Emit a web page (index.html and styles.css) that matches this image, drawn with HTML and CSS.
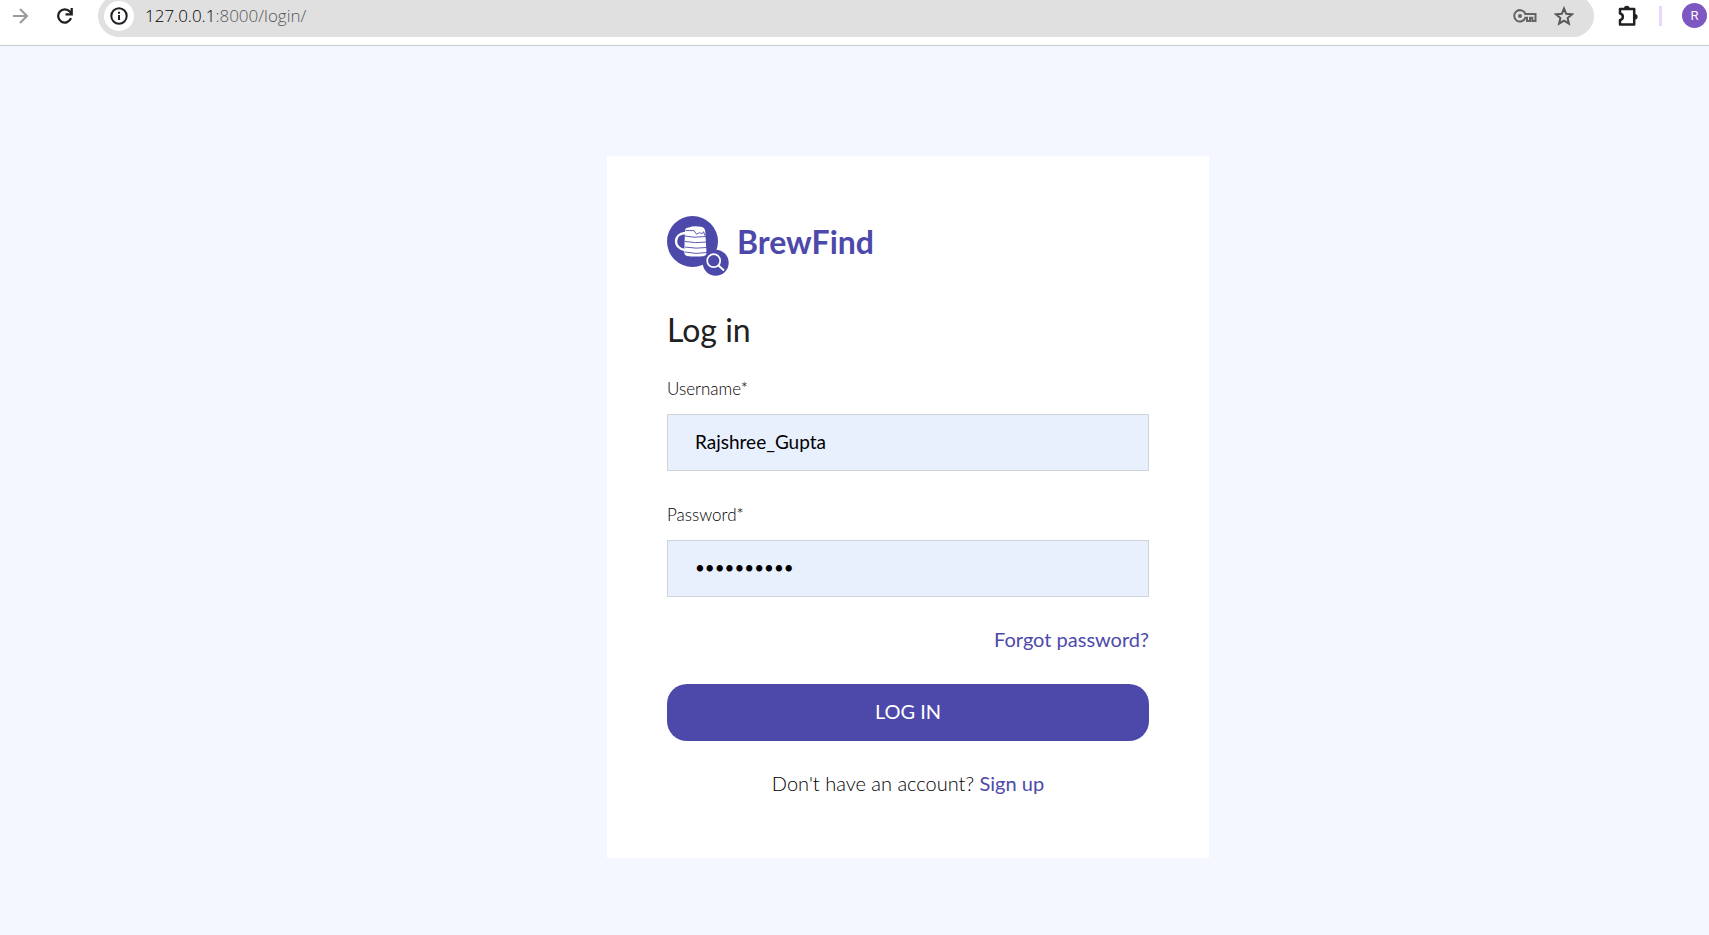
FILE: index.html
```html
<!DOCTYPE html>
<html lang="en">
<head>
<meta charset="utf-8">
<meta name="viewport" content="width=device-width, initial-scale=1">
<title>BrewFind - Log in</title>
<link rel="stylesheet" href="styles.css">
</head>
<body>
<header class="toolbar">
  <button class="tool forward" type="button" aria-label="Forward">
    <svg width="16" height="16" viewBox="0 0 16 16" fill="none" stroke="#9a9b9d" stroke-width="2"><path d="M1 8h13.5M8 1l7 7-7 7"/></svg>
  </button>
  <button class="tool reload" type="button" aria-label="Reload">
    <svg width="16" height="16" viewBox="0 0 16 16" fill="none" stroke="#1f2023" stroke-width="2.3"><path d="M14 10.2A6.6 6.6 0 1 1 12.8 3.6L14.600 5.600"/><path d="M14.700 0v6.300H8.500"/></svg>
  </button>
  <div class="address">
    <button class="site-info" type="button" aria-label="Site information">
      <svg width="18" height="18" viewBox="0 0 18 18" fill="none" stroke="#1f2023" stroke-width="2"><circle cx="9" cy="9" r="7.700"/><path d="M9 8v5M9 4.700v2"/></svg>
    </button>
    <span class="url"><span class="host">127.0.0.1</span>:8000/login/</span>
    <button class="tool key" type="button" aria-label="Passwords">
      <svg width="24" height="14" viewBox="0 0 24 14" fill="none" stroke="#636466" stroke-width="2"><path d="M12.300 5H22.500V12H19.300V8.700H17V12H14V8.700H12.300A5.700 5.700 0 1 1 12.300 5Z"/><circle cx="7" cy="7" r="2" fill="#636466" stroke="none"/></svg>
    </button>
    <button class="tool star" type="button" aria-label="Bookmark this page">
      <svg width="20" height="20" viewBox="0 0 20 20" fill="none" stroke="#58595b" stroke-width="2"><path d="M10 2.500l2.200 5.300 5.800.5-4.400 3.800 1.300 5.600-4.900-3-4.900 3 1.300-5.600L2 8.300l5.800-.5z"/></svg>
    </button>
  </div>
  <button class="tool extensions" type="button" aria-label="Extensions">
    <svg width="22" height="22" viewBox="0 0 22 22"><path d="M3 4h14.200v15.500H3v-4.500c3.800-.6 3.800-6 0-6.600z" fill="none" stroke="#1f2023" stroke-width="2.500" stroke-linejoin="round"/><path d="M7 3.500a2.800 2.800 0 0 1 5.600 0zM17.800 9a2.800 2.800 0 0 1 0 5.600z" fill="#1f2023"/></svg>
  </button>
  <span class="divider"></span>
  <button class="avatar" type="button" aria-label="Profile">R</button>
</header>
<main class="page">
  <section class="card">
    <a class="brand" href="#">
      <svg width="62" height="60" viewBox="0 0 62 60" aria-hidden="true">
        <circle cx="25.500" cy="25.500" r="25.500" fill="#4d49ab"/>
        <circle cx="48.700" cy="46.700" r="13" fill="#4d49ab"/>
        <path d="M18 17C6 18 6 32 18 34" fill="none" stroke="#fff" stroke-width="2.400"/>
        <path d="M18 14Q18.500 11 22 11.500Q26 9.500 34 10.700Q38 11 38.300 16L39.500 37Q39.600 40 36 40.200Q27 41 20 40Q17.300 39.500 17.300 36Z" fill="#fff"/>
        <path d="M18.500 14.500l8.500 .2 2.500 3.500 3-1.500 2.500 1 1.500-2 1.500 4M18 20l9 1.200 12-.7M18 25.500q10 2 22 .5M18 31q11 2 22 .5M18 36q11 2.500 22 .5" fill="none" stroke="#4d49ab" stroke-width=".9"/>
        <circle cx="46.700" cy="44.700" r="6.500" fill="#4d49ab" stroke="#fff" stroke-width="1.700"/>
        <path d="M51.500 49.500l5.500 5" stroke="#fff" stroke-width="2"/>
      </svg>
      <span class="brand-name">BrewFind</span>
    </a>
    <h1 class="title">Log in</h1>
    <form class="form">
      <label class="label" for="username">Username*</label>
      <input class="field" id="username" type="text" value="Rajshree_Gupta" autocomplete="username">
      <label class="label" for="password">Password*</label>
      <input class="field password" id="password" type="password" value="brewbrew12" autocomplete="current-password">
      <a class="link forgot" href="#">Forgot password?</a>
      <button class="submit" type="submit">LOG IN</button>
    </form>
    <p class="signup">Don't have an account? <a class="link" href="#">Sign up</a></p>
  </section>
</main>
</body>
</html>
```
FILE: styles.css
```css
* {
  box-sizing: border-box;
}

body {
  margin: 0;
  min-height: 100vh;
  display: flex;
  flex-direction: column;
  background: #f4f7ff;
  color: #212529;
  font-family: "Lato", "Open Sans", sans-serif;
}

button {
  padding: 0;
  border: 0;
  background: none;
  font: inherit;
  cursor: pointer;
}

svg {
  display: block;
}

.toolbar {
  display: flex;
  align-items: center;
  height: 46px;
  padding: 0 2px 14px 12px;
  overflow: hidden;
  border-bottom: 1px solid #c9cbd0;
  background: #fff;
}

.tool,
.avatar,
.divider {
  flex: none;
}

.reload {
  margin-left: 29px;
}

.address {
  flex: 1;
  display: flex;
  align-items: center;
  height: 42px;
  margin-left: 25px;
  padding: 0 20px 0 6px;
  border-radius: 21px;
  background: #e0e0e0;
}

.site-info {
  display: grid;
  place-items: center;
  width: 30px;
  height: 30px;
  border-radius: 50%;
  background: #fff;
}

.url {
  flex: 1;
  margin-left: 11px;
  color: #55565a;
  font: 300 17px/24px "Open Sans", sans-serif;
}

.host {
  color: #000;
}

.star {
  margin-left: 17px;
}

.extensions {
  margin-left: 23px;
}

.divider {
  width: 3px;
  height: 20px;
  margin: 0 20px;
  background: #ead6fd;
}

.avatar {
  width: 25px;
  height: 25px;
  border-radius: 50%;
  background: #7e57c2;
  color: #fff;
  font: 13px/26px Roboto, sans-serif;
}

.page {
  display: flex;
  justify-content: center;
  padding: 110px 0 77px 107px;
}

.card {
  width: 602px;
  padding: 60px;
  background: #fff;
}

.brand {
  display: flex;
  gap: 8px;
  color: #4d49ab;
  text-decoration: none;
}

.brand-name {
  font-size: 32px;
  font-weight: 700;
  line-height: 52px;
}

.title {
  margin: 34px 0 25px;
  color: #212121;
  font-size: 32px;
  font-weight: 400;
  line-height: 40px;
}

.form {
  display: flex;
  flex-direction: column;
}

.label {
  margin-bottom: 12px;
  font-size: 17px;
  font-weight: 300;
  color: #000;
  line-height: 27px;
}

.field {
  height: 57px;
  margin-bottom: 30px;
  padding: 0 27px 2px;
  border: 1px solid #ced4da;
  border-radius: 0;
  background: #e8effd;
  color: #000;
  font: 19px "Lato", "Open Sans", sans-serif;
}

.password {
  font-size: 17px;
}

.link {
  color: #4d49ab;
  font-weight: 400;
  text-decoration: none;
}

.forgot {
  align-self: flex-end;
  font-size: 20px;
  line-height: 24px;
}

.submit {
  height: 57px;
  margin-top: 33px;
  padding-bottom: 3px;
  border-radius: 20px;
  background: #4d49ab;
  color: #fff;
  font-size: 20px;
}

.signup {
  margin: 27px 0 0;
  color: #000;
  font-size: 20px;
  font-weight: 300;
  line-height: 30px;
  text-align: center;
}
```
